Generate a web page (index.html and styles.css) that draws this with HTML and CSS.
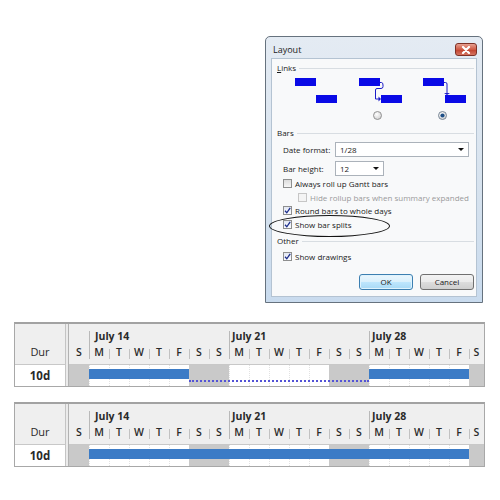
FILE: index.html
```html
<!DOCTYPE html>
<html>
<head>
<meta charset="utf-8">
<title>Layout</title>
<link rel="stylesheet" href="styles.css">
</head>
<body>
<div class="page">
  <div class="top">
    <div class="dialog">
      <div class="titlebar">
        <span class="title">Layout</span>
        <span class="close"><svg width="10" height="8" viewBox="0 0 10 8"><path d="M2 1 L8 7 M8 1 L2 7" stroke="#fff" stroke-width="2.2" stroke-linecap="round"/></svg></span>
      </div>
      <div class="client">
        <div class="group-head"><span><u>L</u>inks</span><i class="rule"></i></div>
        <svg class="links" width="204" height="49" viewBox="0 0 204 49">
          <defs>
            <radialGradient id="rg" cx="0.4" cy="0.35" r="0.7">
              <stop offset="0" stop-color="#ffffff"/>
              <stop offset="1" stop-color="#cfcfcf"/>
            </radialGradient>
          </defs>
          <rect x="18" y="5" width="21" height="8" fill="#0a0ae6"/>
          <rect x="39" y="22" width="21" height="8" fill="#0a0ae6"/>
          <rect x="82" y="5" width="21" height="8" fill="#0a0ae6"/>
          <rect x="104" y="22" width="21" height="8" fill="#0a0ae6"/>
          <path d="M103 9.5 H104.5 Q106 9.5 106 12 V13.5 Q106 15.5 104 15.5 H100 Q98.5 15.5 98.5 17 V26 H102" fill="none" stroke="#1c1cc8" stroke-width="1"/>
          <path d="M101.5 23.5 L104 26 L101.5 28.5 Z" fill="#1c1cc8"/>
          <rect x="146" y="5" width="21" height="8" fill="#0a0ae6"/>
          <rect x="168" y="22" width="21" height="8" fill="#0a0ae6"/>
          <path d="M167 9.5 H168.5 Q170 9.5 170 11 V21" fill="none" stroke="#1c1cc8" stroke-width="1"/>
          <path d="M167 20 H173 L170 22 Z" fill="#1c1cc8"/>
          <circle cx="100.5" cy="42.5" r="4" fill="url(#rg)" stroke="#8a8a8a" stroke-width="0.9"/>
          <circle cx="165.5" cy="42.5" r="4" fill="url(#rg)" stroke="#6f7f90" stroke-width="0.9"/>
          <circle cx="165.5" cy="42.5" r="2.1" fill="#1e4f86"/>
        </svg>
        <div class="group-head bars-head"><span>Bars</span><i class="rule"></i></div>
        <div class="field">
          <span class="flabel">Date format:</span>
          <span class="select wide">1/28<i class="caret"></i></span>
        </div>
        <div class="field">
          <span class="flabel">Bar height:</span>
          <span class="select narrow">12<i class="caret"></i></span>
        </div>
        <div class="check first"><span class="box"></span><span>Always roll up Gantt bars</span></div>
        <div class="check sub disabled"><span class="box"></span><span>Hide rollup bars when summary expanded</span></div>
        <div class="check"><span class="box on"><svg width="7" height="7" viewBox="0 0 7 7"><path d="M1 3.8 L2.8 5.8 L6.2 0.8" fill="none" stroke="#1d2f8c" stroke-width="1.3"/></svg></span><span>Round bars to whole days</span></div>
        <div class="check"><span class="box on"><svg width="7" height="7" viewBox="0 0 7 7"><path d="M1 3.8 L2.8 5.8 L6.2 0.8" fill="none" stroke="#1d2f8c" stroke-width="1.3"/></svg></span><span>Show bar splits</span></div>
        <div class="group-head other-head"><span>Other</span><i class="rule"></i></div>
        <div class="check drawings"><span class="box on"><svg width="7" height="7" viewBox="0 0 7 7"><path d="M1 3.8 L2.8 5.8 L6.2 0.8" fill="none" stroke="#1d2f8c" stroke-width="1.3"/></svg></span><span>Show drawings</span></div>
        <div class="buttons">
          <span class="btn ok">OK</span>
          <span class="btn">Cancel</span>
        </div>
        <div class="ellipse"></div>
      </div>
    </div>
  </div>

  <div class="gantt">
    <div class="dur-head">Dur</div>
    <div class="sep"></div>
    <div class="time-head">
      <div class="month m1">July 14</div>
      <div class="month m2">July 21</div>
      <div class="month m3">July 28</div>
      <div class="day d0">S</div><div class="day wk">M</div><div class="day">T</div><div class="day">W</div><div class="day">T</div><div class="day">F</div><div class="day">S</div><div class="day">S</div>
      <div class="day wk">M</div><div class="day">T</div><div class="day">W</div><div class="day">T</div><div class="day">F</div><div class="day">S</div><div class="day">S</div>
      <div class="day wk">M</div><div class="day">T</div><div class="day">W</div><div class="day">T</div><div class="day">F</div><div class="day">S</div>
    </div>
    <div class="dur-cell">10d</div>
    <div class="time-row">
      <div class="cells">
        <div class="c we"></div><div class="c"></div><div class="c"></div><div class="c"></div><div class="c"></div><div class="c"></div><div class="c we"></div><div class="c we"></div>
        <div class="c"></div><div class="c"></div><div class="c"></div><div class="c"></div><div class="c"></div><div class="c we"></div><div class="c we"></div>
        <div class="c"></div><div class="c"></div><div class="c"></div><div class="c"></div><div class="c"></div><div class="c we"></div>
      </div>
      <div class="bars">
        <div class="bar b1"></div>
        <div class="split"></div>
        <div class="bar b2"></div>
      </div>
    </div>
  </div>

  <div class="gantt">
    <div class="dur-head">Dur</div>
    <div class="sep"></div>
    <div class="time-head">
      <div class="month m1">July 14</div>
      <div class="month m2">July 21</div>
      <div class="month m3">July 28</div>
      <div class="day d0">S</div><div class="day wk">M</div><div class="day">T</div><div class="day">W</div><div class="day">T</div><div class="day">F</div><div class="day">S</div><div class="day">S</div>
      <div class="day wk">M</div><div class="day">T</div><div class="day">W</div><div class="day">T</div><div class="day">F</div><div class="day">S</div><div class="day">S</div>
      <div class="day wk">M</div><div class="day">T</div><div class="day">W</div><div class="day">T</div><div class="day">F</div><div class="day">S</div>
    </div>
    <div class="dur-cell">10d</div>
    <div class="time-row">
      <div class="cells">
        <div class="c we"></div><div class="c"></div><div class="c"></div><div class="c"></div><div class="c"></div><div class="c"></div><div class="c we"></div><div class="c we"></div>
        <div class="c"></div><div class="c"></div><div class="c"></div><div class="c"></div><div class="c"></div><div class="c we"></div><div class="c we"></div>
        <div class="c"></div><div class="c"></div><div class="c"></div><div class="c"></div><div class="c"></div><div class="c we"></div>
      </div>
      <div class="bars">
        <div class="bar b3"></div>
      </div>
    </div>
  </div>
</div>
</body>
</html>
```
FILE: styles.css
```css
* { box-sizing: border-box; margin: 0; padding: 0; }
body {
  margin: 0;
  width: 500px;
  height: 500px;
  overflow: hidden;
  background: #fff;
  font-family: "Open Sans", "Noto Sans", sans-serif;
  color: #1f1f1f;
}
.page { display: flex; flex-direction: column; }
.top { padding: 36px 0 0 265px; }

/* ---------- dialog ---------- */
.dialog {
  width: 218px;
  height: 267px;
  border: 1px solid #66727e;
  border-radius: 5px 5px 0 0;
  background: linear-gradient(#e4ebf3, #d6e2ee 60%, #c9dbee);
  padding: 0 5px 5px 5px;
  display: flex;
  flex-direction: column;
}
.titlebar {
  height: 21px;
  display: flex;
  justify-content: space-between;
  align-items: flex-start;
}
.title { font-size: 9px; line-height: 10px; margin: 8px 0 0 2px; color: #222; }
.close {
  width: 22px;
  height: 13px;
  margin-top: 6px;
  border: 1px solid #7d3126;
  border-radius: 3px;
  background: linear-gradient(#e7a091, #cf5a44 50%, #c0402c 51%, #d57461);
  display: flex;
  align-items: center;
  justify-content: center;
}
.close svg { display: block; }
.client {
  flex: 1;
  position: relative;
  background: #f8f9fa;
  border: 1px solid #b4c3d2;
  padding: 0 2px 0 5px;
  display: flex;
  flex-direction: column;
  font-size: 8px;
  color: #1a1a1a;
}
.group-head {
  display: flex;
  align-items: center;
  gap: 3px;
  height: 10px;
  line-height: 10px;
  margin-top: 4px;
  font-size: 8px;
}
.rule { flex: 1; height: 1px; background: #d8dde2; margin-top: 1px; }
.links { display: block; }
.bars-head { margin-top: 6px; }
.other-head { margin-top: 5px; }
.field {
  display: flex;
  align-items: center;
  height: 15px;
  margin-top: 4px;
  padding-left: 6px;
}
.flabel { width: 52px; }
.select {
  position: relative;
  height: 15px;
  background: #fff;
  border: 1px solid #abb2ba;
  padding-left: 4px;
  line-height: 13px;
}
.select.wide { width: 134px; }
.select.narrow { width: 49px; }
.caret {
  position: absolute;
  right: 4px;
  top: 5px;
  width: 0;
  height: 0;
  border-left: 3px solid transparent;
  border-right: 3px solid transparent;
  border-top: 3px solid #111;
}
.check {
  display: flex;
  align-items: center;
  gap: 3px;
  height: 13.6px;
  padding-left: 6px;
}
.check.first { margin-top: 1px; }
.check.sub { padding-left: 21px; }
.check.disabled { color: #9a9a9a; }
.check.disabled .box { border-color: #c6c6c6; background: #f4f4f4; }
.box {
  width: 9px;
  height: 9px;
  border: 1px solid #8e8f8f;
  background: linear-gradient(#dcdcdc, #f6f6f6);
  display: flex;
  align-items: center;
  justify-content: center;
  flex: none;
}
.box.on { background: linear-gradient(#e2e7f3, #fafbff); }
.box svg { display: block; }
.drawings { margin-top: 3px; }
.buttons {
  display: flex;
  justify-content: flex-end;
  gap: 7px;
  margin-top: 11px;
}
.btn {
  width: 54px;
  height: 16px;
  border: 1px solid #707070;
  border-radius: 3px;
  background: linear-gradient(#f3f3f3, #ebebeb 50%, #dddddd 51%, #cfcfcf);
  text-align: center;
  line-height: 14px;
  font-size: 8px;
}
.btn.ok {
  border-color: #3c7fb1;
  background: linear-gradient(#eaf6fd, #d9f0fc 50%, #bee6fd 51%, #a7d9f5);
  box-shadow: inset 0 0 0 1px #dff3fd;
}
.ellipse {
  position: absolute;
  left: -3px;
  top: 156px;
  width: 121px;
  height: 22px;
  border: 1.4px solid #141414;
  border-radius: 50%;
}

/* ---------- gantt ---------- */
.gantt {
  margin: 19px 0 0 14px;
  width: 471px;
  border: 1px solid #a8a8a8;
  border-top: 2px solid #a2a2a2;
  display: grid;
  grid-template-columns: 51px 3px 415px;
  grid-template-rows: 40px 22px;
  color: #2a2a2a;
}
.gantt + .gantt { margin-top: 15px; }
.dur-head {
  grid-column: 1;
  grid-row: 1;
  background: #efefef;
  border-right: 1px solid #c4c4c4;
  font-size: 11px;
  text-align: center;
  padding-top: 21px;
  line-height: 14px;
}
.sep {
  grid-column: 2;
  grid-row: 1 / 3;
  background: #ebebeb;
  border-right: 1px solid #b2b2b2;
}
.dur-cell {
  grid-column: 1;
  grid-row: 2;
  border-top: 1px solid #c8c8c8;
  border-right: 1px solid #c4c4c4;
  font-weight: 700;
  font-size: 11.5px;
  text-align: center;
  line-height: 21px;
}
.time-head {
  grid-column: 3;
  grid-row: 1;
  background: #efefef;
  display: grid;
  grid-template-columns: repeat(20, 20px) 15px;
  grid-template-rows: 22px 18px;
}
.month {
  grid-row: 1;
  font-weight: 700;
  font-size: 10.5px;
  line-height: 12px;
  padding: 6px 0 0 3px;
  white-space: nowrap;
}
.m1 { grid-column: 2 / span 7; padding-left: 6px; }
.m2 { grid-column: 9 / span 7; }
.m3 { grid-column: 16 / span 6; }
.day {
  grid-row: 2;
  position: relative;
  font-size: 10.5px;
  font-weight: 600;
  text-align: center;
  line-height: 13px;
  padding-top: 0;
}
.day::before {
  content: "";
  position: absolute;
  left: 0;
  top: 3px;
  bottom: 5px;
  width: 1px;
  background: #c2c2c2;
}
.day.d0::before { display: none; }
.day.wk::before { top: -15px; background: #b9b9b9; }
.time-row {
  grid-column: 3;
  grid-row: 2;
  border-top: 1px solid #c8c8c8;
  display: grid;
  grid-template-columns: 415px;
  grid-template-rows: 21px;
}
.cells, .bars {
  grid-column: 1;
  grid-row: 1;
  display: grid;
  grid-template-columns: repeat(20, 20px) 15px;
  grid-template-rows: 21px;
}
.c {
  background: #fff;
  border-left: 1px dotted #e2e2e2;
}
.c:first-child { border-left: 0; }
.c.we { background: #c9c9c9; border-left-color: #c9c9c9; }
.bar {
  grid-row: 1;
  align-self: start;
  margin-top: 4px;
  height: 10px;
  background: #3b7bc6;
}
.b1 { grid-column: 2 / 7; }
.b2 { grid-column: 16 / 21; }
.b3 { grid-column: 2 / 21; }
.split {
  grid-row: 1;
  grid-column: 7 / 16;
  align-self: start;
  margin-top: 15px;
  height: 0;
  border-top: 2px dotted #5353d6;
}
```
